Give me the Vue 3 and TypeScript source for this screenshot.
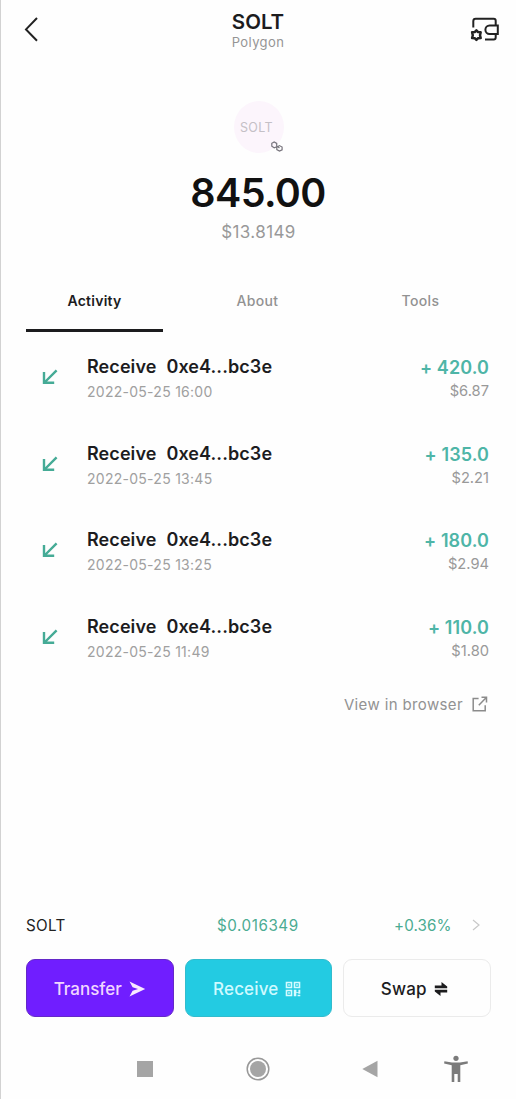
<script setup lang="ts">
interface Transfer {
  date: string
  amount: string
  value: string
}

const tabs: string[] = ['Activity', 'About', 'Tools']

const transfers: Transfer[] = [
  { date: '2022-05-25 16:00', amount: '+ 420.0', value: '$6.87' },
  { date: '2022-05-25 13:45', amount: '+ 135.0', value: '$2.21' },
  { date: '2022-05-25 13:25', amount: '+ 180.0', value: '$2.94' },
  { date: '2022-05-25 11:49', amount: '+ 110.0', value: '$1.80' },
]
</script>

<template>
  <div class="screen">
    <header class="top">
      <svg class="back" width="20" height="30" viewBox="0 0 20 30">
        <path d="M14 3 3 14.400 14 25.700" />
      </svg>
      <div class="heading">
        <h1>SOLT</h1>
        <span class="network">Polygon</span>
      </div>
      <svg class="wallet" width="30" height="28" viewBox="0 0 30 28">
        <path d="M3.300 12.500V6.200q0-2.400 2.400-2.400h18q2 0 2 2v4.500M15 24.500h8.700q2 0 2-2v-3.500M27.800 10.500h-8.200a4.200 4.200 0 0 0 0 8.400h8.200z" />
        <path class="gear" d="M6.400 15.300l1.700 1.800 2.600.2-.7 2.900.7 2.800-2.600.2-1.700 1.700-1.700-1.700-2.600-.2.700-2.800-.7-2.900 2.600-.2z" />
      </svg>
    </header>

    <section class="balance">
      <div class="token">
        <span>SOLT</span>
        <svg class="chain" width="14" height="12" viewBox="0 0 14 12">
          <path d="M7.400 6.500 4.200 7.800 1.800 6.200V3.300L4.200 2l2.500 1.400v2.500l2.800 2M6.800 7.200l2.600-1.600 2.700 1.500v2.700l-2.600 1.300-2.700-1.500z" />
        </svg>
      </div>
      <strong class="amount">845.00</strong>
      <span class="fiat">$13.8149</span>
    </section>

    <nav class="tabs">
      <div v-for="(tab, i) in tabs" :key="tab" class="tab" :class="{ active: i === 0 }">{{ tab }}</div>
    </nav>

    <ul class="list">
      <li v-for="t in transfers" :key="t.date">
        <svg class="arrow" width="18" height="18" viewBox="0 0 18 18">
          <path d="M16.600 2.300 5 14M4 4.100v10.700h10.200" />
        </svg>
        <div class="info">
          <div class="name"><span>Receive</span><span>0xe4...bc3e</span></div>
          <div class="date">{{ t.date }}</div>
        </div>
        <div class="sum">
          <div class="plus">{{ t.amount }}</div>
          <div class="value">{{ t.value }}</div>
        </div>
      </li>
    </ul>

    <div class="browser">
      <span>View in browser</span>
      <svg width="16" height="16" viewBox="0 0 16 16">
        <path d="M6.600 2.500H1.200v12.300h12V9.200M9.500 1.200h5v5.200M14.300 1.500 6.800 9.200" />
      </svg>
    </div>

    <footer class="bottom">
      <div class="market">
        <span class="symbol">SOLT</span>
        <span class="price">$0.016349</span>
        <span class="change">+0.36%</span>
        <svg width="10" height="14" viewBox="0 0 10 14"><path d="M1 2 7 7l-6 5" /></svg>
      </div>
      <div class="actions">
        <button class="transfer">
          <span>Transfer</span>
          <svg width="17" height="16" viewBox="0 0 17 16"><path d="M.5.600 16.200 8 .5 15.400 3.600 9.700 9 8 3.600 6.300z" /></svg>
        </button>
        <button class="receive">
          <span>Receive</span>
          <svg width="16" height="16" viewBox="0 0 16 16">
            <path class="frame" d="M1.500 1.500h5v5h-5zM9.500 1.500h5v5h-5zM1.500 9.500h5v5h-5z" />
            <path d="M3.200 3.200h1.600v1.600H3.200zM11.200 3.200h1.600v1.600h-1.600zM3.200 11.200h1.600v1.600H3.200zM8.800 8.700h2.600v2.200h2v-2.200h1.900v4h-2v-1h-2v3.600H8.800zM12.600 13.700h2.700v1.600h-2.700z" />
          </svg>
        </button>
        <button class="swap">
          <span>Swap</span>
          <svg width="14" height="14" viewBox="0 0 14 14">
            <path d="M.8 3.400h6.700V0L13.200 4.600v1.700H.8zM13.200 10.600H6.500V14L.8 9.400V7.700h12.400z" />
          </svg>
        </button>
      </div>
    </footer>

    <div class="system">
      <svg width="16" height="16" viewBox="0 0 16 16"><path d="M0 0h16v16H0z" /></svg>
      <svg class="home" width="24" height="24" viewBox="0 0 24 24">
        <circle class="ring" cx="12" cy="12" r="10.800" />
        <circle cx="12" cy="12" r="8" />
      </svg>
      <svg class="prev" width="16" height="18" viewBox="0 0 16 18"><path d="M15.500.800v16.400L.300 9z" /></svg>
      <svg class="person" width="24" height="28" viewBox="0 0 24 28">
        <circle cx="12" cy="3.300" r="2.600" />
        <path d="M.4 6.200 8 7.500h8l7.600-1.300.3 2.300-7.600 1.700v16.900h-2.600v-8h-3.400v8H7.700V10.200L.1 8.500z" />
      </svg>
    </div>
  </div>
</template>

<style>
body {
  margin: 0;
  background: #fefefe;
}
</style>

<style scoped>
.screen {
  box-sizing: border-box;
  width: 516px;
  height: 1099px;
  overflow: hidden;
  display: flex;
  flex-direction: column;
  border-left: 1px solid #d2d2d2;
  background: #fefefe;
  color: #1c1c1e;
  font-family: Inter, "Liberation Sans", sans-serif;
}
svg {
  display: block;
  flex: none;
}
path {
  fill: none;
}
.top {
  height: 60px;
  display: flex;
  align-items: flex-start;
  justify-content: space-between;
  padding: 0 16px 0 22px;
}
.back {
  margin-top: 15px;
}
.back path {
  stroke: #222;
  stroke-width: 2;
}
.heading {
  display: flex;
  flex-direction: column;
  align-items: center;
  padding: 10px 0 0 3px;
}
h1 {
  margin: 0;
  font-size: 20.500px;
  line-height: 24px;
  font-weight: 600;
}
.network {
  font-size: 13px;
  line-height: 16px;
  letter-spacing: 0.4px;
  color: #959595;
}
.wallet {
  margin-top: 15px;
}
.wallet path {
  stroke: #222;
  stroke-width: 2;
}
.wallet .gear {
  stroke-width: 2.500;
  stroke-linejoin: round;
}
.balance {
  height: 222px;
  display: flex;
  flex-direction: column;
  align-items: center;
  padding-top: 41px;
  box-sizing: border-box;
}
.token {
  position: relative;
  width: 50px;
  height: 52px;
  border-radius: 50%;
  background: #fcf5fc;
  color: #c4c0c6;
  font-size: 12.500px;
  line-height: 53px;
  letter-spacing: 0.4px;
  text-align: center;
}
.token span {
  margin-left: -4px;
}
.chain {
  position: absolute;
  left: 36px;
  top: 39px;
}
.chain path {
  stroke: #77737c;
  stroke-width: 1.200;
}
.amount {
  margin-top: 16px;
  font-size: 39.500px;
  line-height: 48px;
  font-weight: 600;
  letter-spacing: -0.6px;
  margin-right: 1px;
  color: #111;
}
.fiat {
  margin-top: 4px;
  font-size: 17px;
  line-height: 22px;
  letter-spacing: 0.4px;
  color: #999;
}
.tabs {
  height: 51px;
  display: grid;
  grid-template-columns: repeat(3, 137px);
  gap: 26px;
  padding-left: 25px;
}
.tab {
  box-sizing: border-box;
  height: 50px;
  line-height: 38px;
  text-align: center;
  font-size: 14px;
  font-weight: 500;
  letter-spacing: 0.35px;
  color: #929292;
}
.tab.active {
  color: #1c1c1e;
  font-weight: 600;
  letter-spacing: 0.25px;
  border-bottom: 3px solid #1c1c1e;
}
.list {
  list-style: none;
  margin: 0;
  padding: 21px 27px 0 39px;
}
.list li {
  height: 86.700px;
  display: flex;
}
.arrow {
  margin-top: 14px;
}
.arrow path {
  stroke: #45ab96;
  stroke-width: 2.400;
}
.info {
  margin-left: 29px;
  flex: 1;
}
.name {
  display: flex;
  gap: 10px;
  font-size: 18px;
  line-height: 26px;
  font-weight: 600;
  letter-spacing: 0.08px;
}
.date {
  font-size: 14px;
  line-height: 23px;
  letter-spacing: 0.27px;
  color: #a0a0a0;
}
.sum {
  text-align: right;
}
.plus {
  font-size: 18px;
  line-height: 28px;
  font-weight: 600;
  letter-spacing: 0.1px;
  color: #4eb5a7;
}
.value {
  font-size: 14.700px;
  line-height: 18px;
  color: #999;
}
.browser {
  display: flex;
  justify-content: flex-end;
  align-items: center;
  gap: 9px;
  height: 22px;
  margin-top: -7.500px;
  padding-right: 28px;
  font-size: 15px;
  letter-spacing: 0.37px;
  color: #929292;
}
.browser path {
  stroke: #8b8b8b;
  stroke-width: 1.500;
}
.bottom {
  margin-top: auto;
  padding: 0 25px;
}
.market {
  display: flex;
  align-items: center;
  height: 24px;
  font-size: 15.200px;
  letter-spacing: 0.55px;
  color: #4bab92;
}
.symbol {
  width: 191px;
  letter-spacing: 0.3px;
  color: #222;
}
.price {
  width: 177px;
}
.change {
  flex: 1;
  letter-spacing: 0.1px;
}
.market svg {
  margin-right: 9px;
}
.market path {
  stroke: #c8c8c8;
  stroke-width: 1.200;
}
.actions {
  display: grid;
  grid-template-columns: repeat(3, 147.500px);
  gap: 11px;
  margin-top: 22px;
}
button {
  box-sizing: border-box;
  height: 58px;
  padding: 1px 0 0;
  display: flex;
  align-items: center;
  justify-content: center;
  gap: 7px;
  border-radius: 9px;
  font: 500 17px/22px Inter, "Liberation Sans", sans-serif;
}
.transfer {
  background: #701eff;
  border: 1px solid #6428c8;
  color: #f1d6ff;
}
.transfer path {
  fill: #f8e9ff;
}
.receive {
  background: #23cbe2;
  border: 1px solid #32bccd;
  color: #cffaff;
  letter-spacing: 0.15px;
  padding-right: 2px;
}
.receive path {
  fill: #d6fbff;
}
.receive .frame {
  fill: none;
  stroke: #d6fbff;
  stroke-width: 1.600;
}
.swap {
  background: #fefefe;
  border: 1px solid #ebebeb;
  color: #1c1c1e;
  letter-spacing: 0.2px;
  padding-right: 5px;
}
.swap path {
  fill: #1c1c1e;
}
.system {
  height: 60px;
  margin-top: 22px;
  display: flex;
  align-items: center;
  padding-left: 136px;
}
.home {
  margin-left: 93px;
}
.prev {
  margin-left: 92px;
}
.person {
  margin-left: 66px;
}
.system path,
.system circle {
  fill: #a5a5a5;
}
.system .ring {
  fill: none;
  stroke: #999;
  stroke-width: 1.500;
}
.system .person path,
.system .person circle {
  fill: #7b7b7b;
}
</style>
